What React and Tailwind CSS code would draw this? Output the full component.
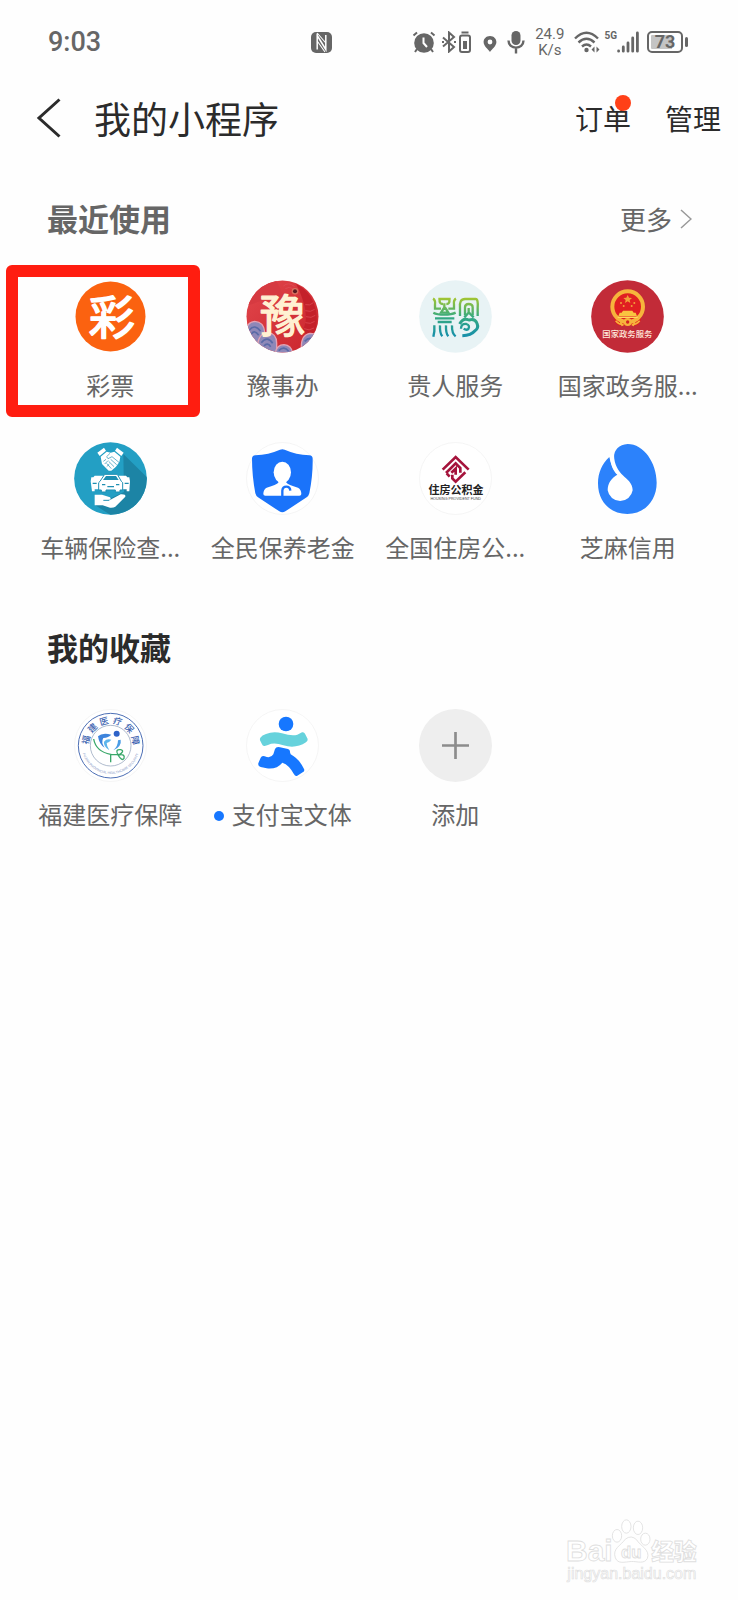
const CJK = "'Noto Sans CJK SC', sans-serif"

const Logo = ({ children }) => (
  <svg viewBox="0 0 219 219" className="h-[73px] w-[73px]" aria-hidden="true">{children}</svg>
)

const Ring = () => <circle cx="109.5" cy="109.5" r="108" fill="#fff" stroke="#f0f0f0" strokeWidth="2" />

const LotteryLogo = () => (
  <Logo>
    <circle cx="109.5" cy="109.5" r="105" fill="#fb6210" />
    <text x="113" y="161" textAnchor="middle" fontSize="138" fontWeight="400" fontFamily={CJK} fill="#fff" stroke="#fff" strokeWidth="5" strokeLinejoin="round">彩</text>
  </Logo>
)

const YuLogo = () => (
  <Logo>
    <defs>
      <clipPath id="yu"><circle cx="109.5" cy="109.5" r="108" /></clipPath>
      <linearGradient id="yuRed" x1="0" y1="0" x2="1" y2="1">
        <stop offset="0" stopColor="#e2474c" />
        <stop offset="1" stopColor="#c9232b" />
      </linearGradient>
    </defs>
    <g clipPath="url(#yu)">
      <rect width="219" height="219" fill="url(#yuRed)" />
      <path d="M0 78 L60 58 L120 62 L90 0 H0Z" fill="#d63a41" />
      <path d="M150 12 C190 30 224 80 208 150 C198 170 180 168 170 150 C188 120 180 70 150 12Z" fill="#c4202a" />
      <g fill="none" stroke="#e0525b" strokeWidth="2">
        <path d="M178 74 q14 4 24 -6 M178 92 q16 6 28 -4 M180 110 q16 6 28 -4 M178 128 q16 6 28 -4 M174 146 q16 8 30 -2" />
        <path d="M112 18 q16 -14 34 2 M118 26 q12 -8 22 0" />
      </g>
      <circle cx="147" cy="34" r="10" fill="#d9705f" />
      <circle cx="147" cy="34" r="6" fill="#5b1a22" />
      <g fill="#8e88b8" stroke="#e3a3b4" strokeWidth="4">
        <path d="M0 160 Q0 126 26 124 Q54 126 56 156 L40 190 H0Z" />
        <path d="M34 200 Q38 158 66 158 Q92 160 92 190 V219 H40Z" />
        <path d="M88 219 Q92 194 114 194 Q136 196 140 219Z" />
        <path d="M166 200 Q166 164 192 160 Q210 160 216 170 V219 H160Z" />
      </g>
      <g fill="none" stroke="#5a6aa6" strokeWidth="5">
        <path d="M10 150 q16 -20 34 4 M16 162 q10 -14 22 4 M46 188 q18 -22 34 2 M54 198 q10 -12 20 2 M98 212 q16 -16 30 2 M176 184 q14 -16 28 -4" />
      </g>
      <text x="110" y="160" textAnchor="middle" fontSize="136" fontWeight="400" fontFamily={CJK} fill="#fff1d2" stroke="#fff1d2" strokeWidth="4" strokeLinejoin="round">豫</text>
    </g>
  </Logo>
)

const GuiLogo = () => (
  <Logo>
    <defs>
      <linearGradient id="gui" gradientUnits="userSpaceOnUse" x1="0" y1="52" x2="0" y2="170">
        <stop offset="0" stopColor="#a6c62f" />
        <stop offset="0.5" stopColor="#35aa80" />
        <stop offset="1" stopColor="#168fab" />
      </linearGradient>
    </defs>
    <circle cx="109.5" cy="109.5" r="109" fill="#e8f3f5" />
    <g fill="none" stroke="url(#gui)" strokeWidth="7">
      <path d="M42 56 Q50 60 48 74 V86 H66 M111 56 Q103 60 105 74 V86 H88" />
      <path d="M58 57 H95 M62 58 Q60 72 72 72 M91 58 Q93 72 82 72 M76 70 V82 L66 98 H88 L78 82" />
      <path d="M43 98 Q54 104 76 104 Q98 104 110 98 M48 115 H106 M56 126 H98" />
      <path d="M46 136 V154 L43 170 M63 136 Q62 160 70 169 M81 136 Q80 160 88 169 M99 136 Q98 160 110 169" />
      <path d="M123 108 V84 Q120 57 138 57 H170 Q178 57 176 84 V108 M138 106 V82 Q138 72 149 72 Q161 72 161 82 V106" />
      <path d="M149 84 V98 L136 112 M150 98 L164 112" />
      <path d="M122 132 Q132 112 150 120 Q168 114 174 130 Q180 144 168 152 Q156 166 130 167" strokeWidth="9" />
      <path d="M126 146 Q126 130 142 132 Q154 136 148 147 Q142 152 134 146" />
    </g>
  </Logo>
)

const GovLogo = () => (
  <Logo>
    <circle cx="109.5" cy="109.5" r="109" fill="#c22b38" />
    <path d="M70 112 Q72 138 88 136 H132 Q148 138 150 112Z" fill="#e01c1c" />
    <circle cx="110" cy="80" r="46" fill="#e01f22" stroke="#f6b43c" strokeWidth="12" />
    <path d="M110 45 l4 8 9 1 -7 6 2 9 -8 -5 -8 5 2 -9 -7 -6 9 -1Z" fill="#f2a03a" />
    <g fill="#f2a03a">
      <circle cx="90" cy="69" r="3" />
      <circle cx="130" cy="69" r="3" />
      <circle cx="98" cy="78" r="3" />
      <circle cx="122" cy="78" r="3" />
    </g>
    <path d="M96 92 H124 L128 98 H134 L138 109 H82 L86 98 H92Z" fill="#f9c440" />
    <path d="M80 112 H140" stroke="#ffd75e" strokeWidth="4" />
    <circle cx="110" cy="126" r="12" fill="#f6b43c" />
    <circle cx="110" cy="126" r="5" fill="#d42222" />
    <path d="M74 122 Q84 134 98 134 M146 122 Q136 134 122 134 M86 118 L94 138 M134 118 L126 138" stroke="#f6b43c" strokeWidth="5" fill="none" />
    <text x="109" y="172" textAnchor="middle" fontSize="25" fontWeight="500" fontFamily={CJK} fill="#ffe9dc">国家政务服务</text>
  </Logo>
)

const CarLogo = () => (
  <Logo>
    <defs><clipPath id="car"><circle cx="109.5" cy="109.5" r="109" /></clipPath></defs>
    <g clipPath="url(#car)">
      <rect width="219" height="219" fill="#239fc4" />
      <path d="M148 36 L219 106 V219 H110 L64 190 L150 150Z" fill="#1c84a5" />
      <g fill="#fff">
        <path d="M70 32 L90 17 L96 26 L77 42Z M149 32 L129 17 L123 26 L142 42Z" />
        <path d="M80 44 L98 29 L110 32 L121 29 L139 44 L136 60 L126 74 L112 86 L104 86 L84 66Z" />
        <path d="M50 118 L52 106 H58 L62 101 H88 V142 H62 V148 H54Z M168 118 L166 106 H160 L156 101 H132 V142 H158 V148 H166Z" />
      </g>
      <g fill="none" stroke="#1f8fb2" strokeWidth="2">
        <path d="M108 34 L98 44 L102 50 L114 44 L136 62 M110 52 L128 68 M104 58 L120 74 M98 64 L112 80 M88 58 L96 52 M92 66 L102 56 M98 74 L106 66" />
      </g>
      <path d="M78 118 L92 97 H130 L142 118 L146 122 V144 H138 V150 H124 V144 H96 V150 H82 V144 H74 V122Z" fill="#fff" stroke="#1f8fb2" strokeWidth="3" />
      <path d="M87 114 L96 102 H126 L134 114Z" fill="#1f8fb2" />
      <path d="M84 128 H94 M126 128 H136 M100 134 H120 M56 124 H68 M152 124 H164" stroke="#1f8fb2" strokeWidth="4" />
      <path d="M62 158 H84 L108 166 Q114 174 102 174 L90 174 H108 L140 157 Q156 156 154 164 L124 194 Q118 198 108 197 L86 190 H62Z" fill="#fff" />
      <path d="M88 175 H106" stroke="#1f8fb2" strokeWidth="3" />
    </g>
  </Logo>
)

const PensionLogo = () => (
  <Logo>
    <Ring />
    <path d="M102 23 Q109 20 116 23 Q150 38 190 40 Q200 41 200 50 Q201 100 190 154 Q188 162 182 166 L118 208 Q109 214 100 208 L36 166 Q30 162 28 154 Q18 100 18 50 Q18 41 28 40 Q68 38 102 23Z" fill="#1a73fa" />
    <ellipse cx="109" cy="91" rx="26" ry="32" fill="#fff" />
    <path d="M97 112 H121 V122 Q126 128 156 137 Q166 142 166 156 Q166 161 160 161 H58 Q52 161 52 156 Q52 142 62 137 Q92 128 97 122Z" fill="#fff" />
    <path d="M109 162 V146 Q110 134 121 134 Q132 134 133 146" fill="none" stroke="#1a73fa" strokeWidth="7" />
  </Logo>
)

const HousingLogo = () => (
  <Logo>
    <Ring />
    <g fill="none" stroke="#a5143c" strokeWidth="8">
      <path d="M71 83 L110 45 L149 83" />
      <path d="M81 93 L110 64 L124 78 V92" />
      <path d="M97 92 L110 80 V98 M139 91 L110 119 L100 109 V98 M83 94 L92 104" />
    </g>
    <text x="111" y="157" textAnchor="middle" fontSize="33" fontWeight="700" fontFamily={CJK} fill="#222">住房公积金</text>
    <text x="110" y="175" textAnchor="middle" fontSize="11" fontFamily="'Liberation Sans', sans-serif" fill="#444">HOUSING PROVIDENT FUND</text>
  </Logo>
)

const SesameLogo = () => (
  <Logo>
    <path d="M55 45 C34 64 21 92 21 124 C21 180 58 216 109 216 C160 216 197 176 197 122 C197 62 158 6 110 6 C84 8 69 24 69 45 L67 56 C74 84 84 96 98 106 L82 98 C70 90 60 68 55 45Z" fill="#2c82fb" />
    <path d="M56 40 C58 66 66 88 79 98 C62 108 50 122 50 145 A38 38 0 0 0 125 145 C125 122 106 110 97 101 C80 86 70 66 69 40Z" fill="#fff" />
  </Logo>
)

const badgeChars = ["福", "建", "医", "疗", "保", "障"]

const FujianLogo = () => (
  <Logo>
    <Ring />
    <circle cx="110" cy="110" r="97" fill="none" stroke="#4d6fb5" strokeWidth="3" />
    <circle cx="110" cy="110" r="61" fill="none" stroke="#8798b4" strokeWidth="2" />
    {badgeChars.map((char, i) => (
      <text key={char} x="110" y="44" textAnchor="middle" fontSize="27" fontWeight="500" fontFamily={CJK} fill="#3c63b0" transform={`rotate(${-77 + i * 31} 110 110)`}>{char}</text>
    ))}
    <path id="fjArc" d="M23 120 A88 88 0 0 0 197 120" fill="none" />
    <text fontSize="10" fontFamily="'Liberation Sans', sans-serif" fill="#7f95c4">
      <textPath href="#fjArc" startOffset="50%" textAnchor="middle">FUJIAN PROVINCIAL HEALTHCARE SECURITY</textPath>
    </text>
    <circle cx="128" cy="74" r="9" fill="#2d62c8" />
    <path d="M72 82 Q84 70 112 77 Q104 86 88 87 Q80 100 92 116 Q76 108 72 82Z" fill="#3d84dc" />
    <path d="M90 98 Q98 88 112 92 Q106 100 98 102 Q98 112 106 124 Q88 112 90 98Z" fill="#5cb4ec" />
    <path d="M132 94 L140 92 Q144 112 118 124 Q132 112 132 94Z" fill="#4a9ce6" />
    <g fill="none" stroke="#3aa86a" strokeWidth="4">
      <path d="M59 90 Q66 128 110 136 V160 M110 136 Q122 138 136 136" />
      <path d="M132 138 Q122 120 140 122 Q154 126 134 138 Q154 134 150 148 Q144 158 132 138" />
    </g>
  </Logo>
)

const SportsLogo = () => (
  <Logo>
    <Ring />
    <circle cx="120" cy="45" r="22" fill="#1677ff" />
    <path d="M43 86 Q48 78 60 75 Q82 66 108 73 Q138 82 154 77 L168 70 Q174 68 177 74 L185 90 Q186 95 180 100 Q150 120 112 109 Q84 99 66 108 L56 111 Q50 112 48 106 L42 94Q41 90 43 86Z" fill="#66d2dc" />
    <path d="M44 146 Q48 138 56 142 Q74 150 82 136 L87 120 Q91 112 102 115 L126 120 Q133 122 132 130 L134 136 Q160 150 174 180 Q177 186 170 190 L154 200 Q148 203 144 196 Q130 168 109 161 Q92 182 62 178 L44 174 Q35 171 37 163Z" fill="#1677ff" />
  </Logo>
)

const AddLogo = () => (
  <Logo>
    <circle cx="109.5" cy="109.5" r="109.5" fill="#eeeeee" />
    <path d="M69 109.5 H150 M109.5 69 V150" stroke="#8c8c8c" strokeWidth="8" />
  </Logo>
)

const recent = [
  { name: "彩票", Icon: LotteryLogo, marked: true },
  { name: "豫事办", Icon: YuLogo },
  { name: "贵人服务", Icon: GuiLogo },
  { name: "国家政务服...", Icon: GovLogo },
  { name: "车辆保险查...", Icon: CarLogo },
  { name: "全民保养老金", Icon: PensionLogo },
  { name: "全国住房公...", Icon: HousingLogo },
  { name: "芝麻信用", Icon: SesameLogo },
]

const favorites = [
  { name: "福建医疗保障", Icon: FujianLogo },
  { name: "支付宝文体", Icon: SportsLogo, dot: true },
  { name: "添加", Icon: AddLogo },
]

const AppGrid = ({ items }) => (
  <div className="mt-10 grid grid-cols-4 gap-y-[39px] px-6">
    {items.map(({ name, Icon, marked, dot }) => (
      <button key={name} className="relative flex flex-col items-center gap-[14px] whitespace-nowrap text-2xl leading-9 text-[#666]">
        <Icon />
        <span className="flex items-center gap-2">
          {dot && <span className="mt-1 h-[10px] w-[10px] rounded-full bg-[#1677ff]" />}
          {name}
        </span>
        {marked && <span className="absolute -top-[15px] right-[-3px] -bottom-[14px] -left-[18px] rounded-md border-[12px] border-[#ff1d10]" />}
      </button>
    ))}
  </div>
)

const StatusBar = () => (
  <div className="flex h-[84px] items-center pr-[50px] pl-12 text-[#666]">
    <span className="font-[Roboto,sans-serif] text-[27px] font-medium">9:03</span>
    <svg viewBox="0 0 21 21" className="mr-20 ml-auto h-[21px] w-[21px]">
      <rect width="21" height="21" rx="5" fill="#666" />
      <path d="M6.2 1.5 V17.5 M6.2 3.5 L14.8 17.5 V3" fill="none" stroke="#fff" strokeWidth="1.5" />
      <path d="M6.2 1 L14.8 11 M6.2 9 L14 20" fill="none" stroke="#fff" strokeWidth="1.1" />
    </svg>
    <div className="flex items-center">
      <svg viewBox="0 0 24 22" className="h-[22px] w-6">
        <circle cx="12" cy="12" r="9.8" fill="#666" />
        <path d="M1.5 4.5 L5 1.5 M22.5 4.5 L19 1.5 M5 18 L3 21 M19 18 L21 21" stroke="#666" strokeWidth="2" />
        <path d="M11.5 6.5 V12 L15 16" fill="none" stroke="#fff" strokeWidth="2" />
      </svg>
      <svg viewBox="0 0 30 22" className="ml-[5px] h-[22px] w-[30px]" fill="none" stroke="#666" strokeWidth="2">
        <path d="M2 6.5 L13 16 L8 20.5 V1.5 L13 6 L2 15.5" />
        <path d="M1 11 h2 M13 11 h2" />
        <rect x="19" y="4.5" width="10" height="16.5" rx="2" />
        <path d="M20.5 1.5 H27.5" />
        <path d="M22 10 H26 V18 H22Z" fill="#666" stroke="none" />
      </svg>
      <svg viewBox="0 0 14 18" className="mt-1 ml-3 h-[18px] w-[14px]">
        <path d="M7 1 C3 1 .6 4 .6 7 C.6 11 5 14 7 17 C9 14 13.4 11 13.4 7 C13.4 4 11 1 7 1Z M7 4.6 a2.4 2.4 0 1 1 0 4.8 a2.4 2.4 0 0 1 0 -4.8Z" fill="#666" fillRule="evenodd" />
      </svg>
      <svg viewBox="0 0 18 24" className="ml-[10px] h-6 w-[18px]">
        <rect x="4.5" y="1" width="9" height="14" rx="4.5" fill="#666" />
        <path d="M1.5 10.5 C1.5 20 16.5 20 16.5 10.5 M9 18 V23.5" fill="none" stroke="#666" strokeWidth="2.4" />
      </svg>
      <span className="ml-[10px] flex flex-col items-center font-[Roboto,sans-serif] text-[15px] leading-4">
        <span>24.9</span>
        <span>K/s</span>
      </span>
      <svg viewBox="0 0 26 22" className="ml-[10px] h-[22px] w-[26px]" fill="none" stroke="#666" strokeWidth="2.4">
        <path d="M1 7.5 Q12.5 -4 24 7.5 M4.5 11.5 Q12.5 4 20.5 11.5 M8 15.5 Q12.5 11.5 17 15.5" />
        <circle cx="12.5" cy="19" r="2.2" fill="#666" stroke="none" />
        <path d="M20.5 15.5 V21.5 L17.5 18.5Z M22.5 15.5 V21.5 L25.5 18.5Z" fill="#666" stroke="none" />
      </svg>
      <span className="mb-3 ml-1 font-[Roboto,sans-serif] text-[10px] leading-3 font-bold">5G</span>
      <svg viewBox="0 0 22 22" className="h-[22px] w-[22px]" stroke="#666" strokeWidth="2.8" strokeLinecap="round">
        <path d="M1.6 20 V20.2 M6.3 16 V20.2 M11 12 V20.2 M15.7 7 V20.2 M20.4 2 V20.2" />
      </svg>
      <span className="ml-2 flex h-[22px] w-9 items-center justify-center rounded-[5px] border-2 border-[#666] bg-linear-to-r from-[#c4c4c4] from-73% to-white to-73% bg-clip-content p-[2px] font-[Roboto,sans-serif] text-lg leading-4 font-bold">73</span>
      <span className="ml-[2px] h-[10px] w-[3px] rounded-sm bg-[#666]" />
    </div>
  </div>
)

const Watermark = () => (
  <svg viewBox="0 0 402 200" className="mt-auto mr-[38px] mb-[14px] h-[67px] w-[134px] self-end" fill="#fff" stroke="#dedede" strokeWidth="2.5">
    <text x="0" y="127" fontSize="90" fontWeight="700" fontFamily="'Liberation Sans', sans-serif">Bai</text>
    <ellipse cx="153" cy="50" rx="14" ry="19" />
    <ellipse cx="181" cy="22" rx="14" ry="20" />
    <ellipse cx="216" cy="26" rx="14" ry="20" />
    <ellipse cx="238" cy="60" rx="14" ry="18" />
    <path d="M148 116 C138 88 166 78 178 60 Q196 46 212 62 C222 80 254 92 244 118 C234 136 214 126 196 127 C176 128 156 136 148 116Z" />
    <text x="165" y="116" fontSize="50" fontWeight="700" fontFamily="'Liberation Sans', sans-serif">du</text>
    <text x="256" y="123" fontSize="68" fontWeight="900" fontFamily={CJK}>经验</text>
    <text x="4" y="180" fontSize="48" fontFamily="'Liberation Sans', sans-serif" strokeWidth="2">jingyan.baidu.com</text>
  </svg>
)

const App = () => {
  return (
    <div className="flex min-h-screen flex-col overflow-hidden bg-[#fefefe] font-['Noto_Sans_CJK_SC',sans-serif]" lang="zh-CN">
      <StatusBar />
      <header className="flex h-[68px] items-center pr-[17px] pl-9 text-[#2b2b2b]">
        <button aria-label="返回" className="w-[58px]">
          <svg viewBox="0 0 25 40" className="h-10 w-[25px]" fill="none" stroke="#2b2b2b" strokeWidth="3">
            <path d="M23.5 1.5 L3 20 L23.5 38.5" />
          </svg>
        </button>
        <h1 className="text-[37px] leading-none">我的小程序</h1>
        <div className="ml-auto flex gap-[34px] text-[28px]">
          <button className="relative">
            订单
            <span className="absolute -top-[2px] right-0 h-4 w-4 rounded-full bg-[#ff4018]" />
          </button>
          <button>管理</button>
        </div>
      </header>
      <section className="pt-11">
        <div className="flex items-center justify-between pr-[46px] pl-[47px] text-[#666]">
          <h2 className="text-[31px] leading-[44px] font-bold">最近使用</h2>
          <button className="flex items-center gap-2 pt-[2px] text-[26px] leading-[42px]">
            更多
            <svg viewBox="0 0 12 20" className="h-5 w-3" fill="none" stroke="#999" strokeWidth="1.5">
              <path d="M1 1 L11 10 L1 19" />
            </svg>
          </button>
        </div>
        <AppGrid items={recent} />
      </section>
      <section className="pt-[60px]">
        <h2 className="pl-[47px] text-[31px] leading-[44px] font-bold text-[#2b2b2b]">我的收藏</h2>
        <AppGrid items={favorites} />
      </section>
      <Watermark />
    </div>
  )
}

export default App
